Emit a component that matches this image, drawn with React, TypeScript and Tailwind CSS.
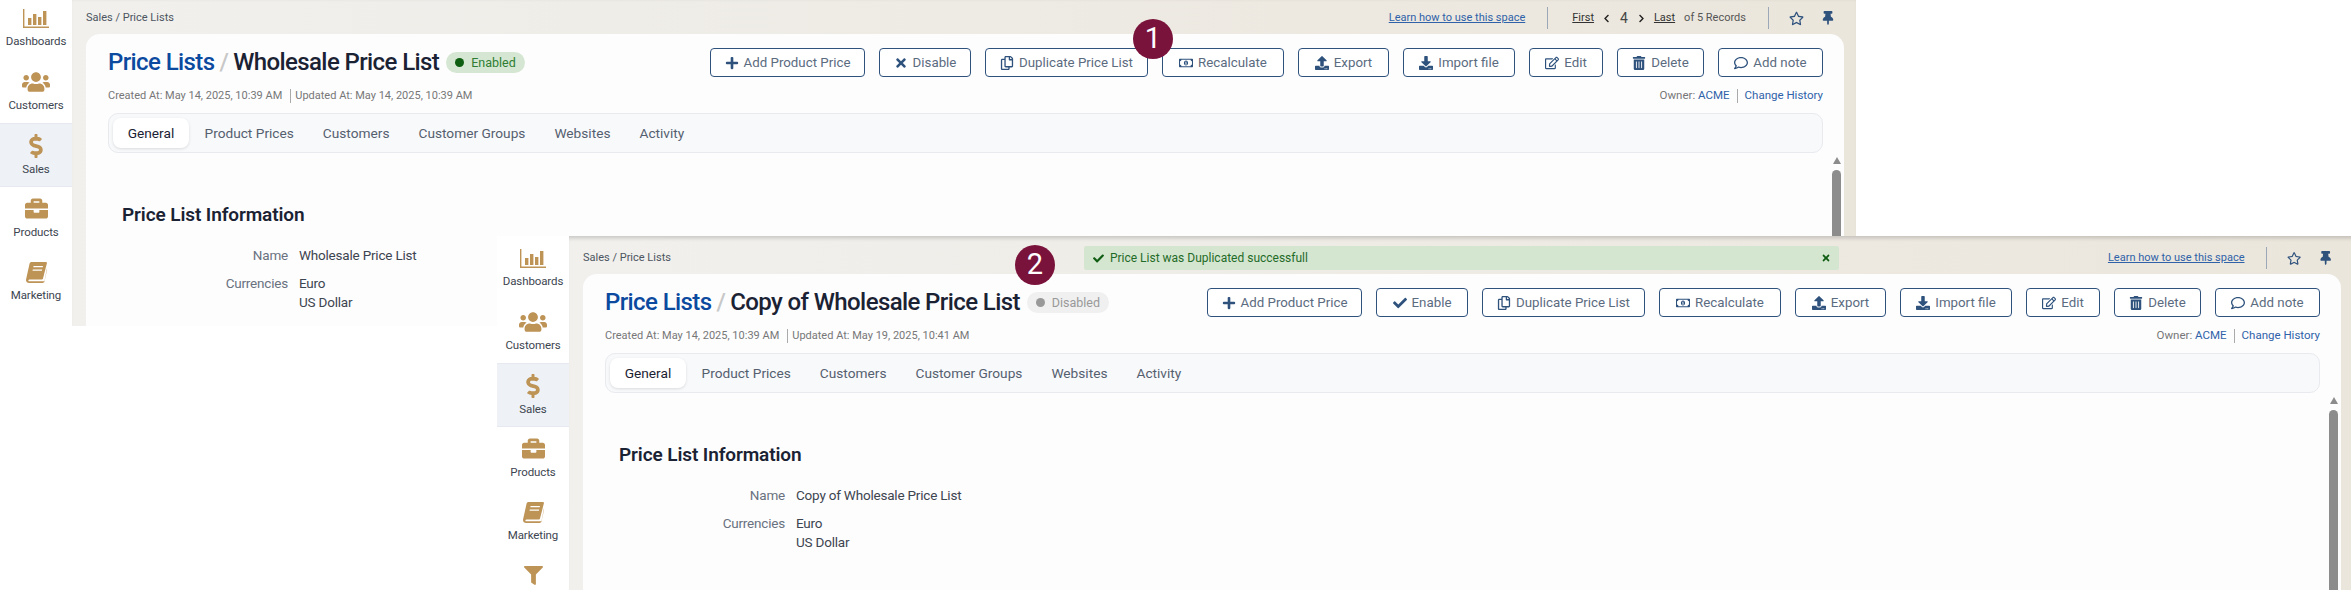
import React from "react";
import {
  FaPlus, FaTimes, FaCheck, FaRegCopy, FaRegMoneyBillAlt, FaUpload, FaDownload, FaRegEdit,
  FaTrashAlt, FaRegComment, FaRegStar, FaThumbtack, FaChevronLeft, FaChevronRight, FaUsers,
  FaDollarSign, FaBriefcase, FaFilter,
} from "react-icons/fa";

function ChartIcon() {
  return (
    <svg width="26" height="19" viewBox="0 0 26 19" fill="#bd9356">
      <path d="M0 0h1.4v17.6H26V19H0z" />
      <rect x="5" y="9" width="3.4" height="7" />
      <rect x="10" y="5" width="3.4" height="11" />
      <rect x="15" y="8" width="3.4" height="8" />
      <rect x="20" y="2" width="3.4" height="14" />
    </svg>
  );
}

function BookIcon() {
  return (
    <svg width="21" height="21" viewBox="0 0 21 21" fill="#bd9356">
      <path d="M5.6 0H20c.8 0 1.1.6.9 1.3L17 16.6c-.2.8-.7 1-1.4 1H3.6c-.8 0-1.2.3-1.2.8 0 .6.5.9 1.3.9h13.6c.7 0 1.1-.5 1.3-1.1L21 6.2V8l-2.5 11.3c-.2 1-.9 1.7-2 1.7H3.2C1.400 21 0 19.900 0 18.300c0-.5.1-1 .2-1.500L3.600 1.600C3.800.6 4.600 0 5.600 0zM7.600 4l-.3 1.300h9.400L17 4zM6.800 7.400l-.3 1.300h9.400l.3-1.300z" />
    </svg>
  );
}

function NavItem({ icon, label, active }: { icon: React.ReactNode; label: string; active?: boolean }) {
  return (
    <div
      className={
        "flex h-[63.5px] flex-col items-center text-[11.5px] leading-[16px] tracking-[-0.1px] text-[#3d4550] " +
        (active ? "border-y border-[#e6eaf0] bg-[#eef2f7]" : "")
      }
    >
      <div className="mt-[10px] flex h-[24px] items-center justify-center text-[#bd9356]">{icon}</div>
      <div className="mt-[3px]">{label}</div>
    </div>
  );
}

function Btn({ icon, label, w }: { icon: React.ReactNode; label: string; w: string }) {
  return (
    <div className={"flex h-[29px] items-center justify-center gap-[5px] whitespace-nowrap rounded-[4px] border border-[#2f527d] bg-white text-[13.3px] text-[#5b6b80] " + w}>
      <span className="text-[14px] text-[#2f527d]">{icon}</span>
      <span>{label}</span>
    </div>
  );
}

function Tabs() {
  const tabs = ["Product Prices", "Customers", "Customer Groups", "Websites", "Activity"];
  return (
    <div className="mt-[9px] flex h-[40px] items-center rounded-[10px] border border-[#e8eaee] bg-[#f8f9fb] pl-[4px] text-[13.7px] text-[#55606f]">
      <div className="mr-[1px] flex h-[30px] w-[76px] items-center justify-center rounded-lg bg-white text-[#1a2233] shadow-[0_1px_3px_rgba(0,0,0,0.12)]">General</div>
      {tabs.map((t) => (
        <div key={t} className="px-[14.5px] whitespace-nowrap">{t}</div>
      ))}
    </div>
  );
}

type WinProps = {
  pos: string;
  name: string;
  enabled: boolean;
  updated: string;
  records: boolean;
  toast: boolean;
  funnel: boolean;
};

function Win({ pos, name, enabled, updated, records, toast, funnel }: WinProps) {
  return (
    <div className={"absolute flex w-[1856px] overflow-hidden bg-white " + pos}>
      <aside className="w-[72px] shrink-0 bg-white">
        <NavItem icon={<ChartIcon />} label="Dashboards" />
        <NavItem icon={<FaUsers size={28} />} label="Customers" />
        <NavItem icon={<FaDollarSign size={24} />} label="Sales" active />
        <NavItem icon={<FaBriefcase size={23} />} label="Products" />
        <NavItem icon={<BookIcon />} label="Marketing" />
        {funnel && <NavItem icon={<FaFilter size={19} />} label="" />}
      </aside>
      <main className="flex min-w-0 flex-1 flex-col bg-gradient-to-r from-[#f1f0ed] to-[#ebe6dc] shadow-[inset_0_5px_4px_-3px_rgba(0,0,0,0.18)]">
        <header className="flex h-[38px] shrink-0 items-center whitespace-nowrap pl-[14px] pr-[21px] pt-[6px] text-[11px] text-[#4c5560]">
          <span className="shrink-0">Sales / Price Lists</span>
          {toast && (
            <div className="ml-[413px] flex h-[24px] w-[755px] shrink-0 items-center rounded-[2px] bg-[#d5e6d0] pl-[9px] pr-[8px] text-[12px] text-[#1f6b28]">
              <FaCheck size={11} className="text-[#0f5c13]" />
              <span className="ml-[6px] flex-1">Price List was Duplicated successfull</span>
              <FaTimes size={10} className="text-[#0f5c13]" />
            </div>
          )}
          <span className={"text-[#2f62a8] underline " + (toast ? "ml-[269px]" : "ml-auto")}>Learn how to use this space</span>
          <span className="ml-[22px] h-[22px] w-px bg-[#9aa8b8]" />
          {records && (
            <div className="flex items-center">
              <span className="ml-[24px] text-[#333] underline">First</span>
              <FaChevronLeft size={9} className="ml-[8px] text-[#222]" />
              <span className="ml-[9px] text-[14px] text-[#444]">4</span>
              <FaChevronRight size={9} className="ml-[9px] text-[#222]" />
              <span className="ml-[8px] text-[#333] underline">Last</span>
              <span className="ml-[9px] text-[#555]">of 5 Records</span>
              <span className="ml-[22px] h-[22px] w-px bg-[#9aa8b8]" />
            </div>
          )}
          <FaRegStar size={15} className="ml-[20px] text-[#2f527d]" />
          <FaThumbtack size={14} className="ml-[17px] text-[#2f527d]" />
        </header>
        <section className="relative ml-[14px] mr-[12px] flex-1 rounded-t-[14px] bg-[#fdfdfe] pl-[22px] pr-[21px] pt-[14px]">
          <div className="flex h-[29px] items-center justify-between">
            <div className="flex items-center whitespace-nowrap text-[24px] font-medium leading-[29px] tracking-[-0.6px] text-[#1a2233]">
              <span className="text-[#0b4a9e]">Price Lists</span>
              <span className="mx-[5px] text-[#c8c8c8]">/</span>
              <span>{name}</span>
              <span
                className={
                  "ml-[7px] flex h-[21px] items-center gap-[7px] rounded-full pl-[9px] pr-[9px] text-[12.5px] font-normal tracking-normal " +
                  (enabled ? "bg-[#d5e7d2] text-[#2e7d32]" : "bg-[#f0f0f0] text-[#999]")
                }
              >
                <span className={"h-[9px] w-[9px] rounded-full " + (enabled ? "bg-[#0d5e10]" : "bg-[#999]")} />
                {enabled ? "Enabled" : "Disabled"}
              </span>
            </div>
            <div className="flex gap-[14px]">
              <Btn icon={<FaPlus />} label="Add Product Price" w="w-[155px]" />
              {enabled ? <Btn icon={<FaTimes />} label="Disable" w="w-[92px]" /> : <Btn icon={<FaCheck />} label="Enable" w="w-[92px]" />}
              <Btn icon={<FaRegCopy />} label="Duplicate Price List" w="w-[163px]" />
              <Btn icon={<FaRegMoneyBillAlt />} label="Recalculate" w="w-[122px]" />
              <Btn icon={<FaUpload />} label="Export" w="w-[91px]" />
              <Btn icon={<FaDownload />} label="Import file" w="w-[112px]" />
              <Btn icon={<FaRegEdit />} label="Edit" w="w-[74px]" />
              <Btn icon={<FaTrashAlt />} label="Delete" w="w-[87px]" />
              <Btn icon={<FaRegComment />} label="Add note" w="w-[105px]" />
            </div>
          </div>
          <div className="mt-[11px] flex h-[16px] items-center whitespace-nowrap text-[11px] text-[#777]">
            <span>Created At: May 14, 2025, 10:39 AM</span>
            <span className="ml-[8px] mr-[4px] h-[14px] w-px bg-[#aaa]" />
            <span>Updated At: {updated}</span>
            <span className="ml-auto text-[11.5px]">Owner:&nbsp;</span>
            <span className="text-[11.5px] text-[#2f62a8]">ACME</span>
            <span className="mx-[7px] h-[14px] w-px bg-[#aaa]" />
            <span className="text-[11.5px] text-[#2f62a8]">Change History</span>
          </div>
          <Tabs />
          <div className="pl-[14px]">
            <h2 className="mt-[50px] text-[19px] font-semibold leading-[24px] tracking-[-0.1px] text-[#1a2233]">Price List Information</h2>
            <div className="mt-[18px] flex h-[20px] items-center text-[13.5px] tracking-[-0.2px]">
              <div className="w-[166px] text-right text-[#6a7280]">Name</div>
              <div className="ml-[11px] text-[#3d4550]">{name}</div>
            </div>
            <div className="mt-[9px] flex text-[13.5px] leading-[19px] tracking-[-0.2px]">
              <div className="w-[166px] text-right text-[#6a7280]">Currencies</div>
              <div className="ml-[11px] text-[#3d4550]">
                <div>Euro</div>
                <div>US Dollar</div>
              </div>
            </div>
          </div>
          <div className="absolute right-[3px] top-[123px] flex h-full w-[9px] flex-col items-center">
            <div className="h-0 w-0 border-x-[4.5px] border-b-[7px] border-x-transparent border-b-[#8c8c8c]" />
            <div className="mt-[6px] w-[9px] flex-1 rounded-t-full bg-[#8c8c8c]" />
          </div>
        </section>
      </main>
    </div>
  );
}

function Marker({ n, pos }: { n: string; pos: string }) {
  return (
    <div className={"absolute flex h-[40px] w-[40px] items-center justify-center rounded-full bg-[#7a133b] text-[29px] text-white " + pos}>{n}</div>
  );
}

export default function App() {
  return (
    <div className="relative h-[590px] w-full overflow-hidden bg-white [font-family:Roboto,'Liberation_Sans',sans-serif]">
      <Win pos="left-0 -top-[4px] h-[330px]" name="Wholesale Price List" enabled updated="May 14, 2025, 10:39 AM" records toast={false} funnel={false} />
      <Win pos="left-[497px] top-[236px] h-[354px]" name="Copy of Wholesale Price List" enabled={false} updated="May 19, 2025, 10:41 AM" records={false} toast funnel />
      <Marker n="1" pos="left-[1133px] top-[19px]" />
      <Marker n="2" pos="left-[1015px] top-[245px]" />
    </div>
  );
}
